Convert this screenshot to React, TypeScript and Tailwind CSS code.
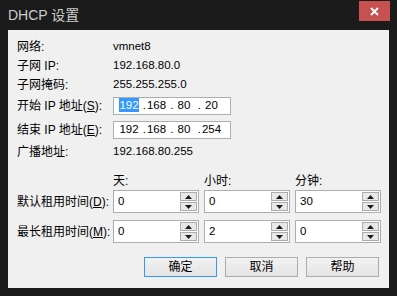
import React from "react";

const font = {
  fontFamily: "'Liberation Sans', 'Noto Sans CJK SC', sans-serif",
};

function U({ c }: { c: string }) {
  return <span className="underline underline-offset-[1px]">{c}</span>;
}

function Arrow({ up }: { up?: boolean }) {
  return (
    <svg width="7" height="4" viewBox="0 0 7 4">
      {up ? (
        <polygon points="0,4 7,4 3.5,0" fill="#1a1a1a" />
      ) : (
        <polygon points="0,0 7,0 3.5,4" fill="#1a1a1a" />
      )}
    </svg>
  );
}

function SpinBox({ value }: { value: string }) {
  return (
    <div className="w-[86px] h-[23px] border border-[#abadb3] bg-white flex items-center">
      <span className="flex-1 pl-[4px] text-[11.5px] leading-none text-black">{value}</span>
      <div className="w-[17px] h-full mr-[1px] py-[1px] flex flex-col justify-between">
        <div className="h-[9px] border border-[#acacac] bg-[#e8e8e8] flex items-center justify-center">
          <Arrow up />
        </div>
        <div className="h-[9px] border border-[#acacac] bg-[#e8e8e8] flex items-center justify-center">
          <Arrow />
        </div>
      </div>
    </div>
  );
}

function IpBox({ parts, selectFirst }: { parts: string[]; selectFirst?: boolean }) {
  return (
    <div className="w-[118px] h-[18px] border border-[#abadb3] bg-white flex items-center pl-[4.5px] text-[11.5px] leading-none text-black">
      {parts.map((p, i) => (
        <React.Fragment key={i}>
          {i > 0 && <span className="w-[6.5px] text-right">.</span>}
          <span className="w-[21px] text-center">
            {i === 0 && selectFirst ? (
              <span className="bg-[#3399ff] text-white py-[1px]">{p}</span>
            ) : (
              p
            )}
          </span>
        </React.Fragment>
      ))}
    </div>
  );
}

function Btn({ label, primary }: { label: string; primary?: boolean }) {
  return (
    <button
      className={
        "w-[73px] h-[20px] border bg-gradient-to-b from-[#f2f2f2] to-[#e4e4e4] text-[12px] leading-none text-black flex items-center justify-center " +
        (primary ? "border-[#3399ff]" : "border-[#adadad]")
      }
    >
      {label}
    </button>
  );
}

export default function App() {
  return (
    <div className="w-[397px] h-[296px] bg-[#1b1b1b] flex flex-col" style={font}>
      {/* title bar */}
      <div className="h-[30px] flex items-start justify-between">
        <span className="pl-[8px] pt-[6px] text-[14px] leading-[18px] text-[#cdcdcd]">DHCP 设置</span>
        <div className="mt-[1px] mr-[7px] w-[31px] h-[20px] bg-[#c75050] flex items-center justify-center">
          <svg width="9" height="9" viewBox="0 0 9 9">
            <path d="M1 1 L8 8 M8 1 L1 8" stroke="#ffffff" strokeWidth="1.8" />
          </svg>
        </div>
      </div>

      {/* client area */}
      <div className="mx-[8px] h-[258px] bg-[#f0f0f0] pl-[9px] pt-[7px] text-[12px] text-black flex flex-col">
        <div className="h-[19px] flex items-center">
          <span className="w-[96px]">网络:</span>
          <span className="text-[11.5px]">vmnet8</span>
        </div>
        <div className="h-[19px] flex items-center">
          <span className="w-[96px]">子网 IP:</span>
          <span className="text-[11.5px]">192.168.80.0</span>
        </div>
        <div className="h-[19px] flex items-center">
          <span className="w-[96px]">子网掩码:</span>
          <span className="text-[11.5px]">255.255.255.0</span>
        </div>
        <div className="mt-[3px] flex items-center">
          <span className="w-[96px]">
            开始 IP 地址(<U c="S" />):
          </span>
          <IpBox parts={["192", "168", "80", "20"]} selectFirst />
        </div>
        <div className="mt-[6px] flex items-center">
          <span className="w-[96px]">
            结束 IP 地址(<U c="E" />):
          </span>
          <IpBox parts={["192", "168", "80", "254"]} />
        </div>
        <div className="mt-[3px] h-[19px] flex items-center">
          <span className="w-[96px]">广播地址:</span>
          <span className="text-[11.5px]">192.168.80.255</span>
        </div>

        <div className="mt-[11px] h-[18px] flex items-center pl-[96px] gap-[5px]">
          <span className="w-[86px]">天:</span>
          <span className="w-[86px]">小时:</span>
          <span className="w-[86px]">分钟:</span>
        </div>
        <div className="flex items-center">
          <span className="w-[96px]">
            默认租用时间(<U c="D" />):
          </span>
          <div className="flex gap-[5px]">
            <SpinBox value="0" />
            <SpinBox value="0" />
            <SpinBox value="30" />
          </div>
        </div>
        <div className="mt-[7px] flex items-center">
          <span className="w-[96px]">
            最长租用时间(<U c="M" />):
          </span>
          <div className="flex gap-[5px]">
            <SpinBox value="0" />
            <SpinBox value="2" />
            <SpinBox value="0" />
          </div>
        </div>

        <div className="mt-[14px] pr-[10px] flex justify-end gap-[8px]">
          <Btn label="确定" primary />
          <Btn label="取消" />
          <Btn label="帮助" />
        </div>
      </div>
    </div>
  );
}
